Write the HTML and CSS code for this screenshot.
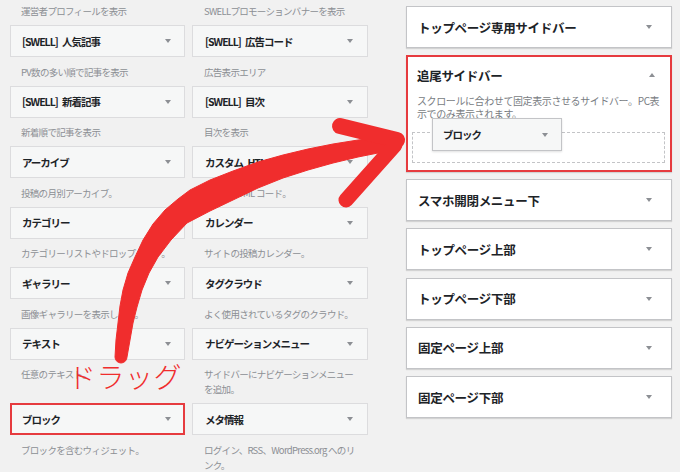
FILE: index.html
```html
<!DOCTYPE html>
<html lang="ja">
<head>
<meta charset="utf-8">
<title>ウィジェット</title>
<link rel="stylesheet" href="styles.css">
</head>
<body>
<div class="page">
  <div class="available">
    <div class="grid">
      <div class="widget"><p class="desc">運営者プロフィールを表示</p></div>
      <div class="widget"><p class="desc">SWELLプロモーションバナーを表示</p></div>

      <div class="widget"><div class="box"><span class="title">[SWELL] 人気記事</span><i class="caret"></i></div><p class="desc">PV数の多い順で記事を表示</p></div>
      <div class="widget"><div class="box"><span class="title">[SWELL] 広告コード</span><i class="caret"></i></div><p class="desc">広告表示エリア</p></div>

      <div class="widget"><div class="box"><span class="title">[SWELL] 新着記事</span><i class="caret"></i></div><p class="desc">新着順で記事を表示</p></div>
      <div class="widget"><div class="box"><span class="title">[SWELL] 目次</span><i class="caret"></i></div><p class="desc">目次を表示</p></div>

      <div class="widget"><div class="box"><span class="title">アーカイブ</span><i class="caret"></i></div><p class="desc">投稿の月別アーカイブ。</p></div>
      <div class="widget"><div class="box"><span class="title">カスタム HTML</span><i class="caret"></i></div><p class="desc">任意の HTML コード。</p></div>

      <div class="widget"><div class="box"><span class="title">カテゴリー</span><i class="caret"></i></div><p class="desc">カテゴリーリストやドロップダウン。</p></div>
      <div class="widget"><div class="box"><span class="title">カレンダー</span><i class="caret"></i></div><p class="desc">サイトの投稿カレンダー。</p></div>

      <div class="widget"><div class="box"><span class="title">ギャラリー</span><i class="caret"></i></div><p class="desc">画像ギャラリーを表示します。</p></div>
      <div class="widget"><div class="box"><span class="title">タグクラウド</span><i class="caret"></i></div><p class="desc">よく使用されているタグのクラウド。</p></div>

      <div class="widget"><div class="box"><span class="title">テキスト</span><i class="caret"></i></div><p class="desc">任意のテキスト。</p></div>
      <div class="widget"><div class="box"><span class="title">ナビゲーションメニュー</span><i class="caret"></i></div><p class="desc">サイドバーにナビゲーションメニュー<br>を追加。</p></div>

      <div class="widget"><div class="box hl"><span class="title">ブロック</span><i class="caret"></i></div><p class="desc">ブロックを含むウィジェット。</p></div>
      <div class="widget"><div class="box"><span class="title">メタ情報</span><i class="caret"></i></div><p class="desc">ログイン、RSS、WordPress.org へのリ<br>ンク。</p></div>
    </div>
  </div>

  <div class="sidebars">
    <div class="sb"><span class="sb-title">トップページ専用サイドバー</span><i class="caret"></i></div>
    <div class="sb open">
      <div class="sb-head"><span class="sb-title">追尾サイドバー</span><i class="caret up"></i></div>
      <p class="sb-desc">スクロールに合わせて固定表示させるサイドバー。PC表<br>示でのみ表示されます。</p>
      <div class="dropzone"></div>
      <div class="ghost"><span class="title">ブロック</span><i class="caret"></i></div>
    </div>
    <div class="sb"><span class="sb-title">スマホ開閉メニュー下</span><i class="caret"></i></div>
    <div class="sb"><span class="sb-title">トップページ上部</span><i class="caret"></i></div>
    <div class="sb"><span class="sb-title">トップページ下部</span><i class="caret"></i></div>
    <div class="sb"><span class="sb-title">固定ページ上部</span><i class="caret"></i></div>
    <div class="sb"><span class="sb-title">固定ページ下部</span><i class="caret"></i></div>
  </div>

  <svg class="arrow" width="680" height="472" viewBox="0 0 680 472">
    <path class="shaft" d="M115,357 L116,340 L118,323 L120,306 L123,290 L128,273 L135,257 L143,240 L153,224 L165,210 L178,199 L190,190 L210,180 L233,171 L258,162 L283,155 L308,149 L333,144 L358,140 L383,137 L402,140 L383,152 L358,157 L333,163 L308,170 L283,178 L258,188 L233,200 L210,211 L187,223 L171,240 L158,257 L149,273 L142,290 L137,307 L133,323 L130,340 L127,357 A6,6 0 0 1 115,357 Z"/>
    <path class="barb" d="M340,126 L397,140"/>
    <path class="barb thin" d="M395,145 L346,200"/>
  </svg>
  <div class="drag-label">ドラッグ</div>
</div>
</body>
</html>
```

FILE: styles.css
```css
* { box-sizing: border-box; }

html, body {
  margin: 0;
  padding: 0;
  background: #f1f1f1;
}

body {
  font-family: "Noto Sans CJK JP", "Noto Sans", sans-serif;
  color: #1d2327;
  overflow: hidden;
}

.page {
  position: relative;
  width: 680px;
  height: 472px;
  display: flex;
  align-items: flex-start;
  overflow: hidden;
}

/* left: available widgets */
.available {
  padding-left: 10px;
}

.grid {
  display: grid;
  grid-template-columns: 175px 176px;
  column-gap: 7px;
  align-items: start;
  margin-top: -3.5px;
}

.widget {
  display: flex;
  flex-direction: column;
}

.box {
  height: 32px;
  background: #f6f7f7;
  border: 1px solid #dcdcde;
  display: flex;
  align-items: center;
  justify-content: space-between;
  padding: 0 13px 0 11px;
}

.grid .widget:nth-child(2n) .box {
  padding-left: 12px;
  padding-right: 14px;
}

.box.hl {
  border: 2px solid #e63b3f;
  padding-left: 10px;
  padding-right: 12px;
}

.title {
  font-size: 10.5px;
  font-weight: 700;
  letter-spacing: -1px;
  word-spacing: 3px;
  color: #1d2327;
  white-space: nowrap;
}

.caret {
  display: block;
  width: 0;
  height: 0;
  border-left: 3px solid transparent;
  border-right: 3px solid transparent;
  border-top: 4px solid #8c8f94;
}

.caret.up {
  border-top: 0;
  border-bottom: 4px solid #8c8f94;
}

.desc {
  margin: 0;
  padding: 7.5px 0 6px 11px;
  font-size: 9.5px;
  letter-spacing: -0.7px;
  line-height: 15px;
  color: #8c8f94;
  white-space: nowrap;
}

.grid .widget:nth-child(2n) .desc {
  padding-left: 12px;
}

/* right: sidebars */
.sidebars {
  margin-left: 38px;
  width: 266px;
  padding-top: 6px;
  display: flex;
  flex-direction: column;
  gap: 7.25px;
}

.sb {
  height: 42px;
  background: #fff;
  border: 1px solid #c3c4c7;
  box-shadow: 0 1px 1px rgba(0, 0, 0, 0.12);
  display: flex;
  align-items: center;
  justify-content: space-between;
  padding: 0 19px 0 11px;
}

.sb-title {
  font-size: 12.5px;
  font-weight: 700;
  letter-spacing: -0.3px;
  color: #1d2327;
  white-space: nowrap;
}

.sb.open {
  position: relative;
  height: 116.5px;
  border: 2px solid #e63b3f;
  display: block;
  padding: 9px 5px 0 4px;
}

.sb-head {
  height: 18px;
  display: flex;
  align-items: center;
  justify-content: space-between;
  padding: 0 10px 0 5px;
}

.sb-desc {
  margin: 9.5px 0 0;
  padding-left: 5px;
  font-size: 10px;
  letter-spacing: -0.4px;
  line-height: 13px;
  color: #787c82;
  white-space: nowrap;
}

.dropzone {
  margin-top: 12.25px;
  height: 31px;
  border: 1px dashed #c3c4c7;
}

.ghost {
  position: absolute;
  left: 24px;
  top: 61px;
  width: 130px;
  height: 33px;
  background: #f6f7f7;
  border: 1px solid #c3c4c7;
  box-shadow: 0 1px 2px rgba(0, 0, 0, 0.12);
  display: flex;
  align-items: center;
  justify-content: space-between;
  padding: 0 13px 0 10px;
}

/* annotation overlay */
.arrow {
  position: absolute;
  left: 0;
  top: 0;
  pointer-events: none;
}

.shaft {
  fill: #f02d2d;
  stroke: #f02d2d;
  stroke-width: 1;
  stroke-linejoin: round;
}

.barb {
  fill: none;
  stroke: #f02d2d;
  stroke-width: 16;
  stroke-linecap: round;
}

.barb.thin {
  stroke-width: 15;
}

.drag-label {
  position: absolute;
  left: 68px;
  top: 362px;
  font-size: 28px;
  line-height: 28px;
  font-weight: 300;
  color: #f02d2d;
  letter-spacing: 0.5px;
  white-space: nowrap;
}
```
